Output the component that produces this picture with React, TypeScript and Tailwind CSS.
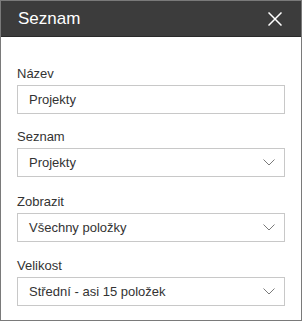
const fields = [
  { label: "Název", value: "Projekty", select: false, gap: "mt-0" },
  { label: "Seznam", value: "Projekty", select: true, gap: "mt-[13px]" },
  { label: "Zobrazit", value: "Všechny položky", select: true, gap: "mt-[15px]" },
  { label: "Velikost", value: "Střední - asi 15 položek", select: true, gap: "mt-[14px]" },
];

function Chevron() {
  return (
    <svg width="12" height="7" viewBox="0 0 12 7" className="shrink-0">
      <path d="M0.5 0.5 L6 6 L11.5 0.5" fill="none" stroke="#7a7a7a" strokeWidth="1" />
    </svg>
  );
}

export default function App() {
  return (
    <div className="h-[321px] w-[302px] border border-[#7a7a7a] bg-white font-['Liberation_Sans',Arial,sans-serif]">
      <div className="flex h-[36px] items-center justify-between border-b border-[#2a2a2a] bg-[#3c3c3c] pl-[17px] pr-[19px]">
        <span className="text-[17px] text-white">Seznam</span>
        <svg width="14" height="14" viewBox="0 0 14 14">
          <path d="M0.5 0.5 L13.5 13.5 M13.5 0.5 L0.5 13.5" stroke="#fff" strokeWidth="1.5" />
        </svg>
      </div>

      <div className="flex flex-col px-[16px] pt-[27px]">
        {fields.map((f) => (
          <div key={f.label} className={`flex flex-col ${f.gap}`}>
            <label className="mb-[1px] h-5 text-[13px] leading-5 text-[#333]">{f.label}</label>
            <div className="flex h-[29px] items-center justify-between border border-[#c8c8c8] pl-[11px] pr-[9px]">
              <span className="text-[13px] text-[#333]">{f.value}</span>
              {f.select && <Chevron />}
            </div>
          </div>
        ))}
      </div>
    </div>
  );
}
